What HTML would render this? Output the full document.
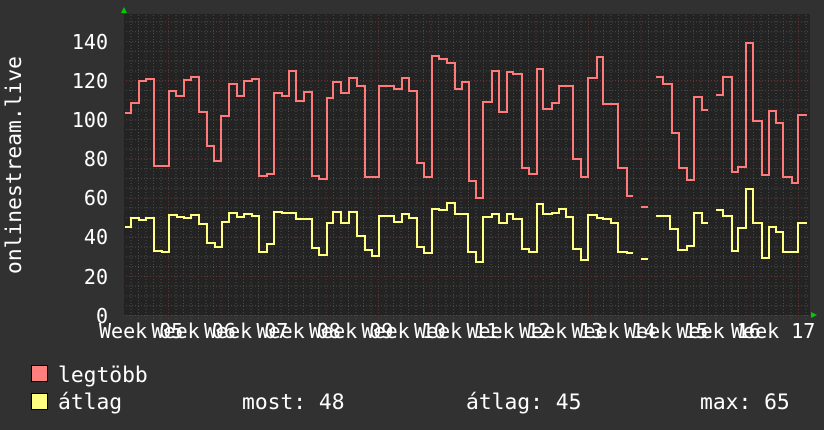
<!DOCTYPE html>
<html><head><meta charset="utf-8"><style>
html,body{margin:0;padding:0;background:#313131;}
svg{display:block;}
text{font-family:"DejaVu Sans Mono","Liberation Mono",monospace;fill:#fff;font-size:20px;}
.lg{font-size:21.3px;}
</style></head><body>
<svg width="824" height="430" viewBox="0 0 824 430" xmlns="http://www.w3.org/2000/svg">
<defs>
<pattern id="mh" x="0" y="315" width="824" height="9.786" patternUnits="userSpaceOnUse">
<line x1="0" y1="0.5" x2="824" y2="0.5" stroke="#4a4a4a" stroke-width="1" stroke-dasharray="1,2"/>
</pattern>
<pattern id="mv" x="123" y="0" width="7.5" height="430" patternUnits="userSpaceOnUse">
<line x1="0.5" y1="0" x2="0.5" y2="430" stroke="#4a4a4a" stroke-width="1" stroke-dasharray="1,2"/>
</pattern>
<pattern id="Mh" x="0" y="315" width="824" height="39.143" patternUnits="userSpaceOnUse">
<line x1="0" y1="0.5" x2="824" y2="0.5" stroke="#6a3232" stroke-width="1" stroke-dasharray="1,2"/>
</pattern>
<pattern id="Mv" x="168" y="0" width="52.5" height="430" patternUnits="userSpaceOnUse">
<line x1="0.5" y1="0" x2="0.5" y2="430" stroke="#6a3232" stroke-width="1" stroke-dasharray="1,2"/>
</pattern>
</defs>
<rect x="124" y="14" width="686" height="301" fill="#232323"/>
<rect x="124" y="14" width="686" height="304" fill="url(#mh)"/>
<rect x="124" y="14" width="686" height="305" fill="url(#mv)"/>
<rect x="124" y="14" width="686" height="301" fill="url(#Mh)"/>
<rect x="124" y="14" width="686" height="305" fill="url(#Mv)"/>
<polygon points="121,13 127,13 124,7" fill="#00cc00"/>
<polygon points="811,312 811,318 817,315" fill="#00cc00"/>
<path fill="none" stroke="#ff7a7a" stroke-width="2" d="M125,113 H131 V103 H139 V81 H146 V79 H154 V166 H169 V91 H176 V96 H184 V80 H191 V77 H199 V112 H207 V146 H214 V161 H221 V116 H229 V84 H237 V96 H244 V81 H252 V79 H259 V176 H267 V174 H274 V93 H282 V96 H289 V71 H296 V101 H304 V92 H312 V176 H319 V179 H327 V98 H333 V82 H341 V93 H349 V78 H357 V86 H365 V177 H379 V86 H394 V89 H402 V78 H409 V91 H417 V163 H424 V177 H432 V56 H439 V59 H447 V63 H455 V89 H462 V82 H469 V181 H476 V198 H483 V102 H492 V71 H499 V112 H507 V72 H513 V74 H522 V168 H529 V174 H537 V69 H543 V109 H552 V103 H559 V86 H573 V159 H581 V177 H588 V78 H597 V57 H603 V104 H618 V168 H627 V196 H633 M641,207 H648 M656,77 H663 V84 H672 V133 H679 V168 H687 V180 H694 V97 H702 V110 H708 M716,95 H723 V77 H732 V172 H738 V167 H746 V43 H753 V121 H762 V175 H769 V111 H776 V123 H783 V177 H792 V183 H798 V115 H807"/>
<path fill="none" stroke="#ffff80" stroke-width="2" d="M125,227 H131 V218 H139 V220 H146 V218 H154 V251 H162 V252 H169 V215 H177 V217 H184 V218 H191 V215 H199 V224 H207 V243 H215 V247 H222 V222 H229 V213 H237 V217 H244 V214 H252 V216 H259 V252 H267 V244 H274 V212 H282 V213 H289 V213 H296 V219 H312 V248 H319 V255 H327 V223 H333 V212 H341 V223 H349 V212 H357 V236 H365 V250 H372 V256 H379 V216 H394 V222 H402 V214 H409 V218 H417 V247 H424 V253 H432 V209 H439 V210 H447 V203 H455 V214 H468 V252 H476 V262 H483 V217 H492 V214 H499 V223 H507 V214 H513 V219 H522 V249 H529 V252 H537 V204 H543 V214 H552 V213 H559 V209 H566 V217 H573 V249 H581 V260 H588 V215 H597 V218 H603 V219 H611 V223 H618 V252 H627 V253 H633 M641,259 H648 M656,216 H670 V229 H678 V250 H687 V246 H694 V213 H702 V223 H708 M716,210 H723 V216 H732 V251 H738 V228 H746 V189 H753 V223 H762 V258 H769 V227 H776 V232 H783 V252 H798 V223 H807"/>
<g text-anchor="end">
<text x="108" y="49">140</text>
<text x="108" y="88">120</text>
<text x="108" y="127">100</text>
<text x="108" y="166">80</text>
<text x="108" y="205">60</text>
<text x="108" y="244">40</text>
<text x="108" y="284">20</text>
<text x="108" y="323">0</text>
</g>
<text class="lg" transform="translate(21,165) rotate(-90)" text-anchor="middle">onlinestream.live</text>
<g>
<text x="99" y="338" xml:space="preserve">Week 05</text>
<text x="151.5" y="338" xml:space="preserve">Week 06</text>
<text x="204" y="338" xml:space="preserve">Week 07</text>
<text x="256.5" y="338" xml:space="preserve">Week 08</text>
<text x="309" y="338" xml:space="preserve">Week 09</text>
<text x="361.5" y="338" xml:space="preserve">Week 10</text>
<text x="414" y="338" xml:space="preserve">Week 11</text>
<text x="466.5" y="338" xml:space="preserve">Week 12</text>
<text x="519" y="338" xml:space="preserve">Week 13</text>
<text x="571.5" y="338" xml:space="preserve">Week 14</text>
<text x="624" y="338" xml:space="preserve">Week 15</text>
<text x="676.5" y="338" xml:space="preserve">Week 16</text>
<text x="731" y="338" xml:space="preserve">Week 17</text>
</g>
<rect x="31.5" y="365.5" width="16" height="16" fill="#ff7f7f" stroke="#000" stroke-width="1"/>
<rect x="31.5" y="393.5" width="16" height="16" fill="#ffff80" stroke="#000" stroke-width="1"/>
<text class="lg" x="58" y="382">legtöbb</text>
<text class="lg" x="58" y="409">átlag</text>
<text class="lg" x="242" y="409">most: 48</text>
<text class="lg" x="466" y="409">átlag: 45</text>
<text class="lg" x="700" y="409">max: 65</text>
</svg>
</body></html>
